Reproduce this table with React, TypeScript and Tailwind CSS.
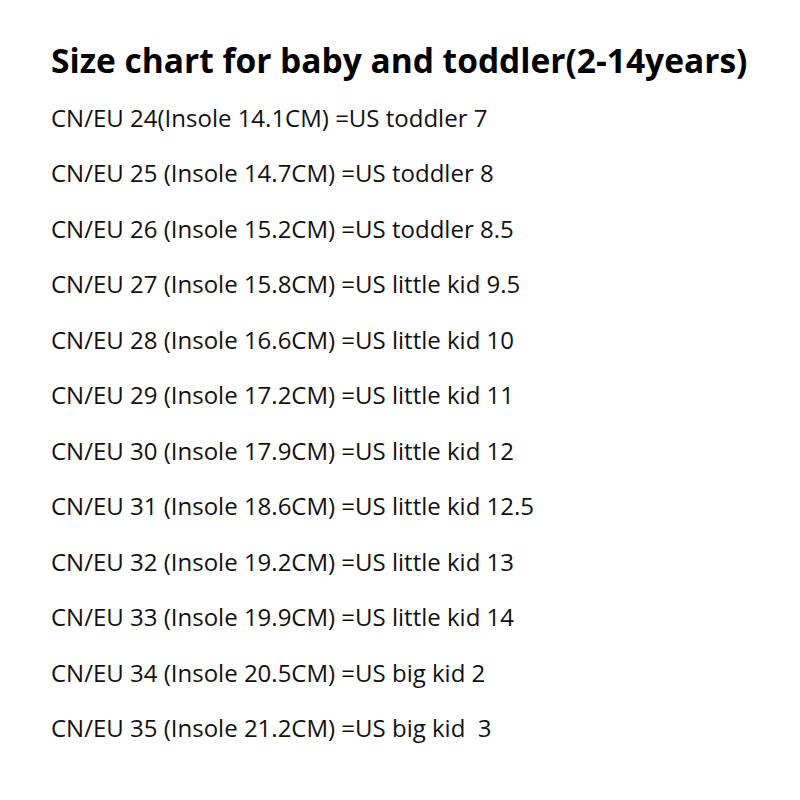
const rows = [
  'CN/EU 24(Insole 14.1CM) =US toddler 7',
  'CN/EU 25 (Insole 14.7CM) =US toddler 8',
  'CN/EU 26 (Insole 15.2CM) =US toddler 8.5',
  'CN/EU 27 (Insole 15.8CM) =US little kid 9.5',
  'CN/EU 28 (Insole 16.6CM) =US little kid 10',
  'CN/EU 29 (Insole 17.2CM) =US little kid 11',
  'CN/EU 30 (Insole 17.9CM) =US little kid 12',
  'CN/EU 31 (Insole 18.6CM) =US little kid 12.5',
  'CN/EU 32 (Insole 19.2CM) =US little kid 13',
  'CN/EU 33 (Insole 19.9CM) =US little kid 14',
  'CN/EU 34 (Insole 20.5CM) =US big kid 2',
  'CN/EU 35 (Insole 21.2CM) =US big kid  3',
];

export default function App() {
  return (
    <div className="w-[800px] h-[800px] bg-white text-black font-['Open_Sans',sans-serif] pl-[51px] pt-[40px]">
      <h1 className="text-[33.5px] leading-[40px] font-bold">
        Size chart for baby and toddler(2-14years)
      </h1>
      <ul className="mt-[10px]">
        {rows.map((r) => (
          <li key={r} className="text-[24px] leading-[55.45px] whitespace-pre text-[#111]">
            {r}
          </li>
        ))}
      </ul>
    </div>
  );
}
